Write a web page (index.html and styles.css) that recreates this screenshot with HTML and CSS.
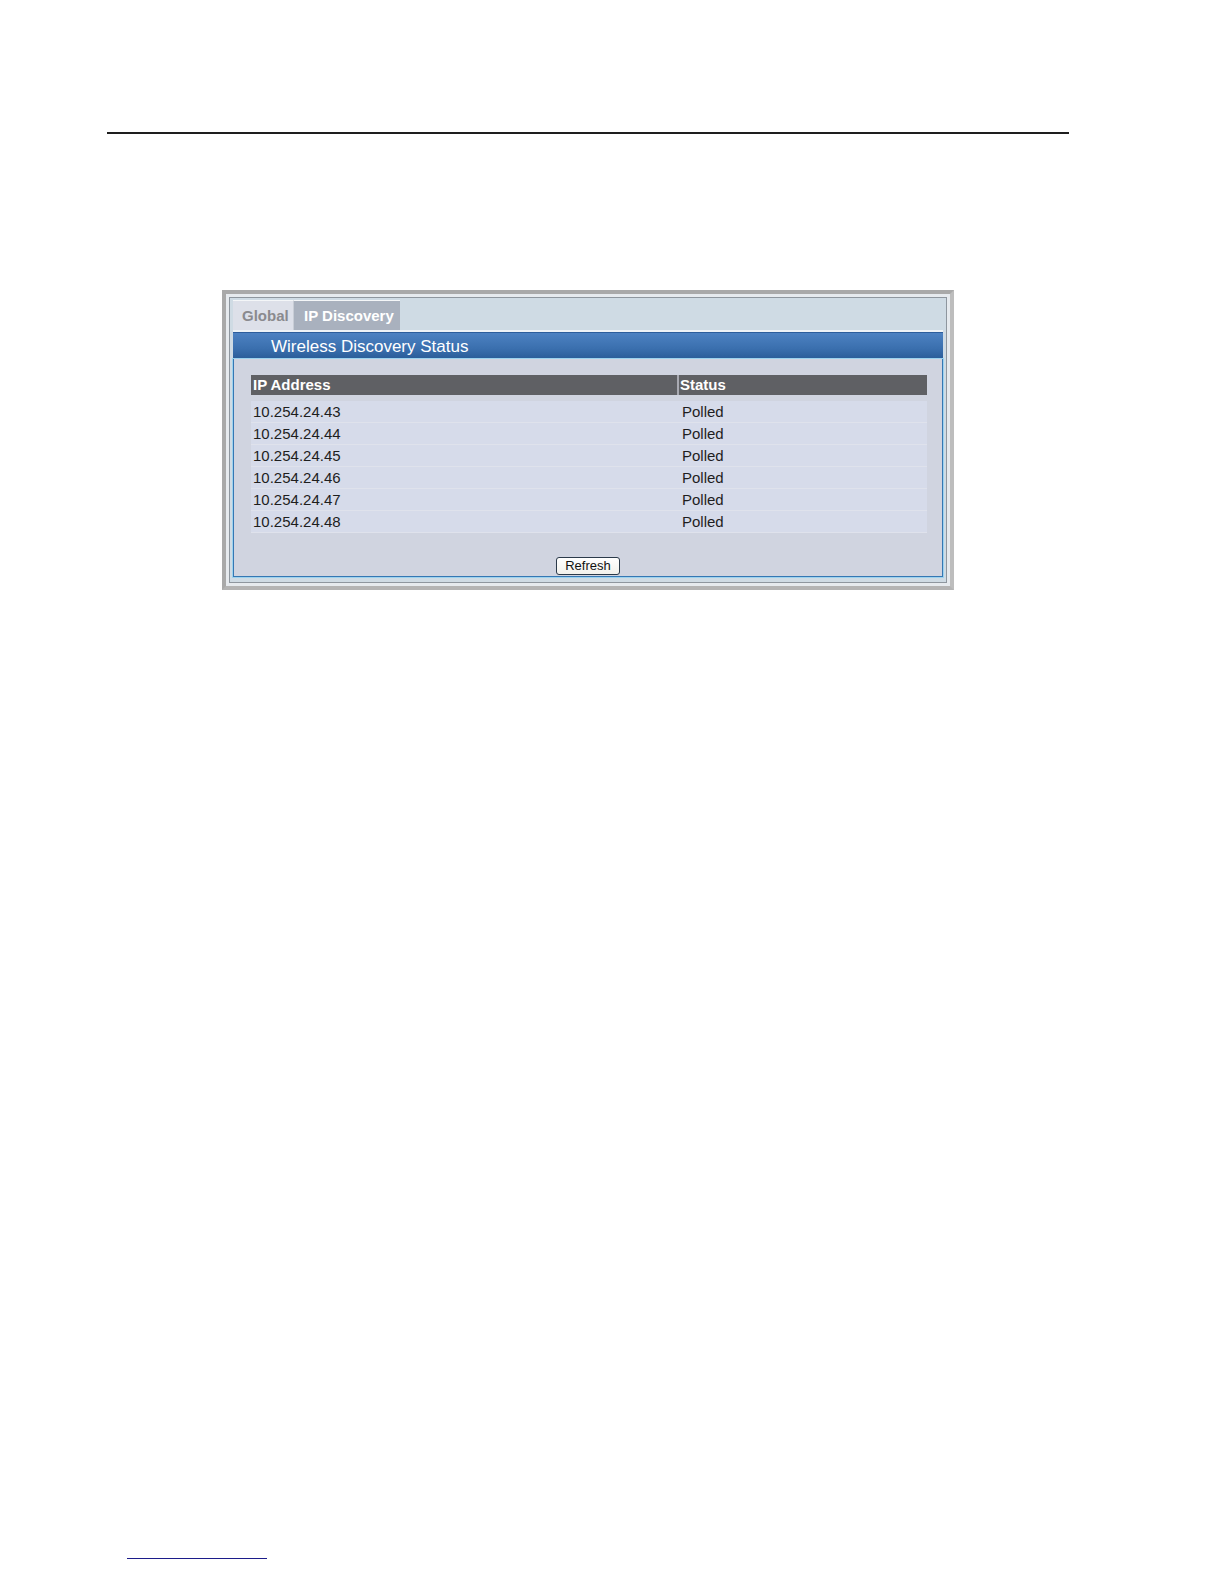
FILE: index.html
```html
<!DOCTYPE html>
<html>
<head>
<meta charset="utf-8">
<link rel="stylesheet" href="styles.css">
</head>
<body>
<div class="page">
  <div class="rule"></div>
  <div class="panel">
    <div class="panel-inner">
      <div class="tabs">
        <div class="tab tab-off">Global</div>
        <div class="tab tab-on">IP Discovery</div>
      </div>
      <div class="titlebar">Wireless Discovery Status</div>
      <div class="content">
        <div class="table">
          <div class="thead">
            <div class="c1">IP Address</div>
            <div class="c2">Status</div>
          </div>
          <div class="row"><div class="c1">10.254.24.43</div><div class="c2">Polled</div></div>
          <div class="row"><div class="c1">10.254.24.44</div><div class="c2">Polled</div></div>
          <div class="row"><div class="c1">10.254.24.45</div><div class="c2">Polled</div></div>
          <div class="row"><div class="c1">10.254.24.46</div><div class="c2">Polled</div></div>
          <div class="row"><div class="c1">10.254.24.47</div><div class="c2">Polled</div></div>
          <div class="row"><div class="c1">10.254.24.48</div><div class="c2">Polled</div></div>
        </div>
        <div class="actions"><button class="btn">Refresh</button></div>
      </div>
    </div>
  </div>
  <div class="footline"></div>
</div>
</body>
</html>
```

FILE: styles.css
```css
html, body {
  margin: 0;
  padding: 0;
  background: #ffffff;
}
body {
  font-family: "Liberation Sans", Arial, sans-serif;
  width: 1224px;
  height: 1584px;
  overflow: hidden;
}
.page {
  padding-top: 132px;
  padding-left: 107px;
}
.rule {
  width: 962px;
  height: 2px;
  background: #1e1e1e;
}
.panel {
  margin-top: 156px;
  margin-left: 115px;
  width: 732px;
  height: 300px;
  box-sizing: border-box;
  border: 4px solid #a9a9a9;
  border-right-color: #bdbdbd;
  border-bottom-color: #b4b4b4;
  background: #e6eaee;
  padding: 3px;
}
.panel-inner {
  box-sizing: border-box;
  height: 100%;
  border: 1px solid #8e969e;
  background: #cfdbe4;
  padding: 1px 3px 5px 3px;
  display: flex;
  flex-direction: column;
}
.tabs {
  display: flex;
  height: 30px;
  padding-top: 1px;
  border-bottom: 2px solid #eef3f7;
}
.tab {
  font-size: 15px;
  font-weight: bold;
  line-height: 29px;
  border-top: 1px solid #f4f6f8;
  padding: 0 0;
}
.tab-off {
  width: 60px;
  box-sizing: border-box;
  padding-left: 9px;
  background: #dde0e9;
  color: #8a8a8e;
}
.tab-on {
  width: 107px;
  box-sizing: border-box;
  padding-left: 10px;
  background: #a9b1be;
  color: #ffffff;
  border-left: 1px solid #c8cdd6;
}
.titlebar {
  height: 27px;
  background: linear-gradient(#4d82c2, #3a6fae 60%, #2a5c98);
  color: #ffffff;
  font-size: 17px;
  line-height: 27px;
  padding-left: 38px;
  border-top: 1px solid #2d5e9c;
  box-sizing: border-box;
}
.content {
  flex: 1;
  background: #d0d4e0;
  border: 1px solid #3577b3;
  border-top: none;
  box-shadow: 0 0 0 1px #9cd2ee;
  padding: 16px 17px 0 17px;
}
.table {
  width: 676px;
}
.thead {
  display: flex;
  height: 20px;
  background: #5f6064;
  color: #ffffff;
  font-weight: bold;
  font-size: 15px;
  line-height: 20px;
  margin-bottom: 6px;
}
.thead .c1 {
  width: 428px;
  padding-left: 2px;
  box-sizing: border-box;
  border-right: 2px solid #a9aab2;
}
.thead .c2 {
  flex: 1;
  padding-left: 1px;
}
.row {
  display: flex;
  height: 22px;
  background: #d6dbea;
  border-bottom: 1px solid #dfe2ec;
  box-sizing: border-box;
  font-size: 15px;
  line-height: 22px;
  color: #1e1e1e;
}
.row .c1 {
  width: 430px;
  padding-left: 2px;
  box-sizing: border-box;
}
.row .c2 {
  flex: 1;
  padding-left: 1px;
}
.actions {
  display: flex;
  justify-content: center;
  margin-top: 24px;
}
.btn {
  font-family: "Liberation Sans", Arial, sans-serif;
  font-size: 13px;
  width: 64px;
  height: 18px;
  padding: 0;
  line-height: 16px;
  color: #111111;
  background: linear-gradient(#ffffff, #f2f1ec);
  border: 1px solid #2b3a4a;
  border-radius: 3px;
}
.footline {
  margin-top: 968px;
  margin-left: 20px;
  width: 140px;
  height: 1px;
  background: #1c1c8a;
}
```
